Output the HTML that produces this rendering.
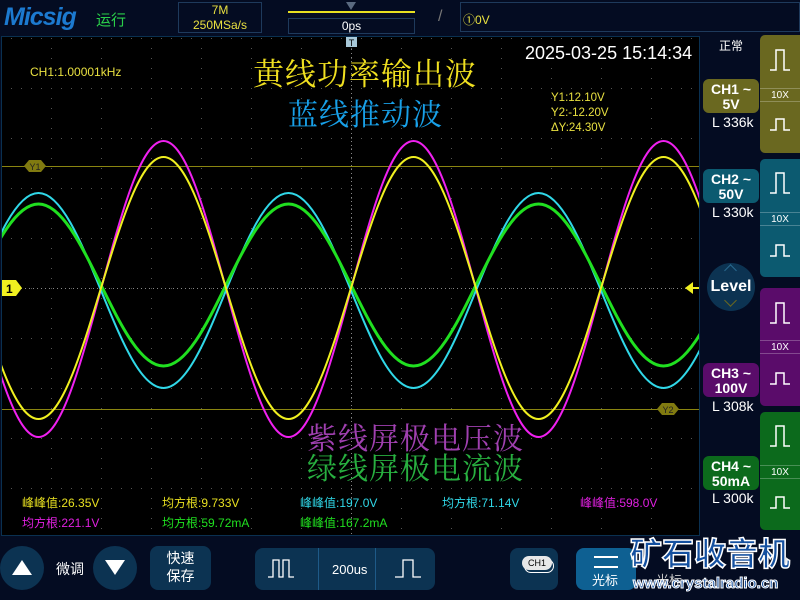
<!DOCTYPE html><html style="width:800px;height:600px;overflow:hidden"><head><meta charset="utf-8"><style>
*{margin:0;padding:0;box-sizing:border-box}
body{width:800px;height:600px;background:#040c22;position:relative;overflow:hidden;font-family:"Liberation Sans","Noto Sans CJK SC",sans-serif;color:#fff}
.a{position:absolute;white-space:nowrap}
.cjk{font-family:"Noto Serif CJK SC","Noto Sans CJK SC",serif}
.rb{position:absolute;left:760px;width:40px;border-radius:5px 0 0 5px}
.lb{position:absolute;left:703px;width:56px;height:34px;border-radius:6px;font-weight:bold;font-size:14px;text-align:center;line-height:15px;padding-top:3px;white-space:nowrap}
.ll{position:absolute;left:712px;font-size:14px}
.tx{position:absolute;left:760px;width:40px;text-align:center;font-size:10px;height:14px;line-height:14px;border-top:1px solid rgba(255,255,255,.25);border-bottom:1px solid rgba(255,255,255,.25)}
.btn{position:absolute;background:#0c3352;border-radius:8px}
</style></head><body>
<div class="a" style="left:4px;top:3px;font:italic bold 25px 'Liberation Sans',sans-serif;color:#1c7ad0;letter-spacing:-1px">Micsig</div>
<div class="a" style="left:96px;top:9px;font-size:15px;color:#2ad04a">运行</div>
<div class="a" style="left:178px;top:2px;width:84px;height:31px;border:1px solid #1e3a5c;font-size:12px;color:#e8e040;text-align:center;line-height:15px">7M<br>250MSa/s</div>
<div class="a" style="left:288px;top:11px;width:127px;height:2px;background:#e8e020"></div>
<div class="a" style="left:288px;top:18px;width:127px;height:16px;border:1px solid #1e3a5c;font-size:12px;text-align:center;line-height:14px">0ps</div>
<div class="a" style="left:346px;top:2px;width:0;height:0;border-left:5px solid transparent;border-right:5px solid transparent;border-top:8px solid #5a6a80"></div>
<div class="a" style="left:438px;top:8px;font-size:16px;color:#777">/</div>
<div class="a" style="left:460px;top:2px;width:340px;height:30px;border:1px solid #1e3a5c;font-size:12px;color:#e8e040;padding:8px 0 0 2px">①0V</div>
<div class="a" style="left:1px;top:36px;width:699px;height:500px;background:#000;border:1px solid #0a3050;overflow:hidden">
<svg width="699" height="500" viewBox="1 36 699 500" style="position:absolute;left:0;top:0">
<defs><pattern id="g" x="0" y="37" width="50" height="50" patternUnits="userSpaceOnUse">
<g fill="#555"><rect x="0" y="0" width="1" height="1"/><rect x="0" y="10" width="1" height="1"/><rect x="0" y="20" width="1" height="1"/><rect x="0" y="30" width="1" height="1"/><rect x="0" y="40" width="1" height="1"/><rect x="10" y="0" width="1" height="1"/><rect x="20" y="0" width="1" height="1"/><rect x="30" y="0" width="1" height="1"/><rect x="40" y="0" width="1" height="1"/></g></pattern></defs>
<rect x="0" y="36" width="700" height="500" fill="url(#g)"/>
<line x1="350.5" y1="36" x2="350.5" y2="536" stroke="#888" stroke-dasharray="1 3"/>
<line x1="0" y1="287.5" x2="700" y2="287.5" stroke="#888" stroke-dasharray="1 3"/>
<line x1="0" y1="165.5" x2="700" y2="165.5" stroke="#8a8510"/>
<line x1="0" y1="408.5" x2="700" y2="408.5" stroke="#8a8510"/>
<g fill="none" stroke-width="2">
<path stroke="#f020f0" d="M-150 288 c20.4,-75.8 39.9,-148 62.5,-148 c22.6,0 42.1,72.2 62.5,148 c20.4,75.8 39.9,148 62.5,148 c22.6,0 42.1,-72.2 62.5,-148 c20.4,-75.8 39.9,-148 62.5,-148 c22.6,0 42.1,72.2 62.5,148 c20.4,75.8 39.9,148 62.5,148 c22.6,0 42.1,-72.2 62.5,-148 c20.4,-75.8 39.9,-148 62.5,-148 c22.6,0 42.1,72.2 62.5,148 c20.4,75.8 39.9,148 62.5,148 c22.6,0 42.1,-72.2 62.5,-148 c20.4,-75.8 39.9,-148 62.5,-148 c22.6,0 42.1,72.2 62.5,148 c20.4,75.8 39.9,148 62.5,148 c22.6,0 42.1,-72.2 62.5,-148"/>
<path stroke="#30d8e8" d="M-150 289.5 c20.4,49.9 39.9,97.5 62.5,97.5 c22.6,0 42.1,-47.6 62.5,-97.5 c20.4,-49.9 39.9,-97.5 62.5,-97.5 c22.6,0 42.1,47.6 62.5,97.5 c20.4,49.9 39.9,97.5 62.5,97.5 c22.6,0 42.1,-47.6 62.5,-97.5 c20.4,-49.9 39.9,-97.5 62.5,-97.5 c22.6,0 42.1,47.6 62.5,97.5 c20.4,49.9 39.9,97.5 62.5,97.5 c22.6,0 42.1,-47.6 62.5,-97.5 c20.4,-49.9 39.9,-97.5 62.5,-97.5 c22.6,0 42.1,47.6 62.5,97.5 c20.4,49.9 39.9,97.5 62.5,97.5 c22.6,0 42.1,-47.6 62.5,-97.5 c20.4,-49.9 39.9,-97.5 62.5,-97.5 c22.6,0 42.1,47.6 62.5,97.5"/>
<path stroke="#20e020" stroke-width="3" d="M-150 284 c20.4,41.5 39.9,81 62.5,81 c22.6,0 42.1,-39.5 62.5,-81 c20.4,-41.5 39.9,-81 62.5,-81 c22.6,0 42.1,39.5 62.5,81 c20.4,41.5 39.9,81 62.5,81 c22.6,0 42.1,-39.5 62.5,-81 c20.4,-41.5 39.9,-81 62.5,-81 c22.6,0 42.1,39.5 62.5,81 c20.4,41.5 39.9,81 62.5,81 c22.6,0 42.1,-39.5 62.5,-81 c20.4,-41.5 39.9,-81 62.5,-81 c22.6,0 42.1,39.5 62.5,81 c20.4,41.5 39.9,81 62.5,81 c22.6,0 42.1,-39.5 62.5,-81 c20.4,-41.5 39.9,-81 62.5,-81 c22.6,0 42.1,39.5 62.5,81"/>
<path stroke="#f0f020" d="M-150 287 c20.4,-67.1 39.9,-131 62.5,-131 c22.6,0 42.1,63.9 62.5,131 c20.4,67.1 39.9,131 62.5,131 c22.6,0 42.1,-63.9 62.5,-131 c20.4,-67.1 39.9,-131 62.5,-131 c22.6,0 42.1,63.9 62.5,131 c20.4,67.1 39.9,131 62.5,131 c22.6,0 42.1,-63.9 62.5,-131 c20.4,-67.1 39.9,-131 62.5,-131 c22.6,0 42.1,63.9 62.5,131 c20.4,67.1 39.9,131 62.5,131 c22.6,0 42.1,-63.9 62.5,-131 c20.4,-67.1 39.9,-131 62.5,-131 c22.6,0 42.1,63.9 62.5,131 c20.4,67.1 39.9,131 62.5,131 c22.6,0 42.1,-63.9 62.5,-131"/>
</g>
<polygon points="23,165 28,159 40,159 45,165 40,171 28,171" fill="#807a10"/>
<text x="34" y="169" font-size="9" fill="#222" text-anchor="middle" font-family="Liberation Sans">Y1</text>
<polygon points="656,408 661,402 673,402 678,408 673,414 661,414" fill="#807a10"/>
<text x="667" y="412" font-size="9" fill="#222" text-anchor="middle" font-family="Liberation Sans">Y2</text>
<polygon points="1,279 15,279 21,287 15,295 1,295" fill="#f0f020"/>
<text x="5" y="292" font-size="12" font-weight="bold" fill="#000" font-family="Liberation Sans">1</text>
<polygon points="684,287 692,281 692,293" fill="#f0f020"/><rect x="692" y="286" width="8" height="2" fill="#f0f020"/>
<rect x="345" y="36" width="11" height="10" fill="#a8c8d8"/><text x="350.5" y="45" font-size="9" fill="#000" text-anchor="middle" font-family="Liberation Sans">T</text>
</svg>
</div>
<div class="a" style="left:30px;top:65px;font-size:12px;color:#e8e040">CH1:1.00001kHz</div>
<div class="a" style="left:525px;top:43px;font-size:18px;color:#fff">2025-03-25 15:14:34</div>
<div class="a" style="left:551px;top:91px;font-size:11.5px;color:#e8e040;line-height:15px">Y1:12.10V<br>Y2:-12.20V<br>ΔY:24.30V</div>
<div class="a cjk" style="left:253px;top:49px;font-size:31px;color:#f0e020;letter-spacing:1px">黄线功率输出波</div>
<div class="a cjk" style="left:288px;top:90px;font-size:30px;color:#18a0e8;letter-spacing:1px">蓝线推动波</div>
<div class="a cjk" style="left:307px;top:414px;font-size:30px;color:#a040b0;letter-spacing:1px">紫线屏极电压波</div>
<div class="a cjk" style="left:307px;top:444px;font-size:30px;color:#28b040;letter-spacing:1px">绿线屏极电流波</div>
<div class="a" style="top:494px;left:22px;font-size:12px;color:#e8e020">峰峰值:26.35V</div>
<div class="a" style="top:494px;left:162px;font-size:12px;color:#e8e020">均方根:9.733V</div>
<div class="a" style="top:494px;left:300px;font-size:12px;color:#30d8e8">峰峰值:197.0V</div>
<div class="a" style="top:494px;left:442px;font-size:12px;color:#30d8e8">均方根:71.14V</div>
<div class="a" style="top:494px;left:580px;font-size:12px;color:#e020e0">峰峰值:598.0V</div>
<div class="a" style="top:514px;left:22px;font-size:12px;color:#e020e0">均方根:221.1V</div>
<div class="a" style="top:514px;left:162px;font-size:12px;color:#20e020">均方根:59.72mA</div>
<div class="a" style="top:514px;left:300px;font-size:12px;color:#20e020">峰峰值:167.2mA</div>
<div class="a" style="left:719px;top:37px;font-size:12px">正常</div>
<div class="rb" style="top:35px;height:118px;background:#6a6820"></div><div class="tx" style="top:88px">10X</div>
<div class="rb" style="top:159px;height:118px;background:#0c5a70"></div><div class="tx" style="top:212px">10X</div>
<div class="rb" style="top:288px;height:118px;background:#5a0c6a"></div><div class="tx" style="top:340px">10X</div>
<div class="rb" style="top:412px;height:118px;background:#0c6a1c"></div><div class="tx" style="top:465px">10X</div>
<svg class="a" style="left:760px;top:0" width="40" height="540" fill="none" stroke="#fff" stroke-width="1.5">
<path d="M10 70h6v-20h8v20h6M10 130h6v-11h8v11h6M10 193h6v-20h8v20h6M10 256h6v-11h8v11h6M10 323h6v-20h8v20h6M10 384h6v-11h8v11h6M10 446h6v-20h8v20h6M10 508h6v-11h8v11h6"/></svg>
<div class="lb" style="top:79px;background:#6a6820">CH1 ~<br>5V</div><div class="ll" style="top:114px">L 336k</div>
<div class="lb" style="top:169px;background:#0c5a70">CH2 ~<br>50V</div><div class="ll" style="top:204px">L 330k</div>
<div class="lb" style="top:363px;background:#5a0c6a">CH3 ~<br>100V</div><div class="ll" style="top:398px">L 308k</div>
<div class="lb" style="top:456px;background:#0c6a1c">CH4 ~<br>50mA</div><div class="ll" style="top:490px">L 300k</div>
<div class="a" style="left:707px;top:263px;width:48px;height:48px;border-radius:50%;background:#0c3352;font-size:16px;font-weight:bold;text-align:center;line-height:48px">Level</div>
<div class="a" style="left:726px;top:266px;width:9px;height:9px;border-left:1px solid #2a6a90;border-top:1px solid #2a6a90;transform:rotate(45deg)"></div>
<div class="a" style="left:726px;top:296px;width:9px;height:9px;border-right:1px solid #6a6820;border-bottom:1px solid #6a6820;transform:rotate(45deg)"></div>
<div class="a" style="left:0;top:546px;width:44px;height:44px;border-radius:50%;background:#0c3352"></div>
<div class="a" style="left:12px;top:560px;border-left:10px solid transparent;border-right:10px solid transparent;border-bottom:15px solid #fff"></div>
<div class="a" style="left:56px;top:559px;font-size:14px">微调</div>
<div class="a" style="left:93px;top:546px;width:44px;height:44px;border-radius:50%;background:#0c3352"></div>
<div class="a" style="left:105px;top:560px;border-left:10px solid transparent;border-right:10px solid transparent;border-top:15px solid #fff"></div>
<div class="btn" style="left:150px;top:546px;width:61px;height:44px;font-size:14px;text-align:center;line-height:18px;padding-top:3px">快速<br>保存</div>
<div class="btn" style="left:255px;top:548px;width:180px;height:42px"></div>
<div class="a" style="left:318px;top:548px;width:1px;height:42px;background:#1e5a88"></div>
<div class="a" style="left:375px;top:548px;width:1px;height:42px;background:#1e5a88"></div>
<div class="a" style="left:332px;top:562px;font-size:13px">200us</div>
<svg class="a" style="left:255px;top:548px" width="180" height="42" fill="none" stroke="#fff" stroke-width="1.3"><path d="M13 29h5v-17h6v17h4v-17h6v17h5M140 29h8v-17h10v17h8"/></svg>
<div class="btn" style="left:510px;top:548px;width:48px;height:42px"></div>
<div class="a" style="left:524px;top:559px;width:30px;height:14px;border-radius:7px;border:1px solid #fff;background:#0c3352"></div>
<div class="a" style="left:522px;top:556px;width:30px;height:14px;border-radius:7px;background:#e8e8e8;color:#000;font-size:9px;text-align:center;line-height:14px">CH1</div>
<div class="btn" style="left:576px;top:548px;width:60px;height:42px;background:#0e6092"></div>
<div class="a" style="left:594px;top:556px;width:24px;height:2px;background:#fff"></div>
<div class="a" style="left:594px;top:566px;width:24px;height:2px;background:#fff"></div>
<div class="a" style="left:592px;top:570px;font-size:13px">光标</div>
<div class="a" style="left:656px;top:570px;font-size:13px;color:#ccc">光标</div>
<div class="a" style="left:630px;top:534px;font-size:32px;line-height:40px;font-weight:bold;color:#1450a0;-webkit-text-stroke:1.5px #fff">矿石收音机</div>
<div class="a" style="left:633px;top:574px;font-size:15px;line-height:20px;font-weight:bold;color:#1450a0;-webkit-text-stroke:1px #fff">www.crystalradio.cn</div>
</body></html>
